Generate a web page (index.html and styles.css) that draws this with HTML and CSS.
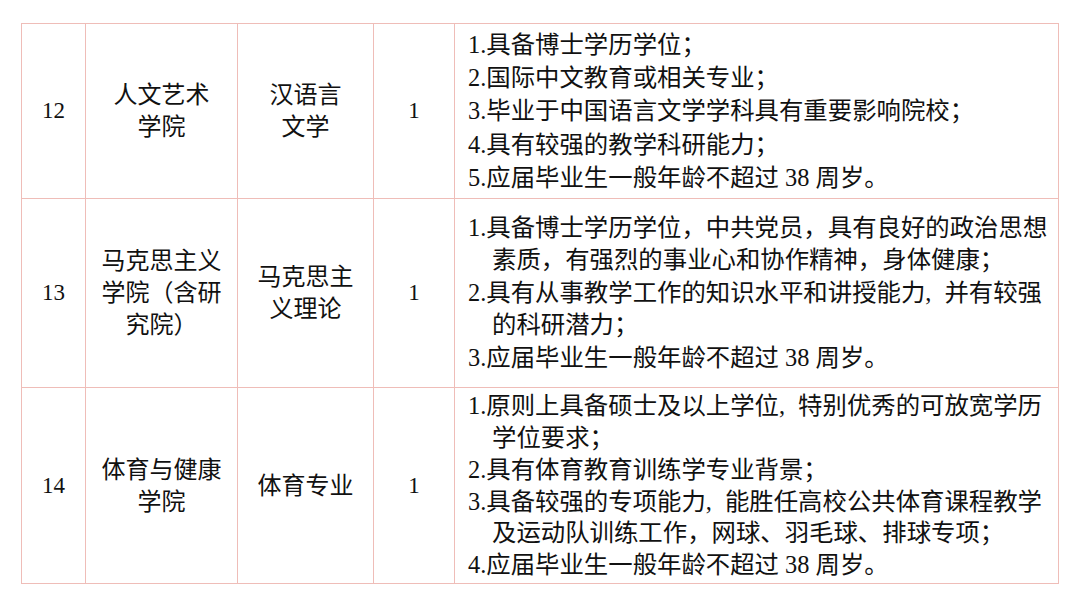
FILE: index.html
```html
<!DOCTYPE html>
<html lang="zh-CN">
<head>
<meta charset="utf-8">
<link rel="stylesheet" href="styles.css">
</head>
<body>
<div class="page">
<table class="grid">
  <colgroup>
    <col class="c-no"><col class="c-dept"><col class="c-major"><col class="c-num"><col class="c-req">
  </colgroup>
  <tr class="r1">
    <td class="no">12</td>
    <td class="mid">人文艺术<br>学院</td>
    <td class="mid">汉语言<br>文学</td>
    <td class="no">1</td>
    <td class="req">
      <div class="item">1.具备博士学历学位；</div>
      <div class="item">2.国际中文教育或相关专业；</div>
      <div class="item">3.毕业于中国语言文学学科具有重要影响院校；</div>
      <div class="item">4.具有较强的教学科研能力；</div>
      <div class="item">5.应届毕业生一般年龄不超过 38 周岁。</div>
    </td>
  </tr>
  <tr class="r2">
    <td class="no">13</td>
    <td class="mid">马克思主义<br>学院（含研<br>究院）</td>
    <td class="mid">马克思主<br>义理论</td>
    <td class="no">1</td>
    <td class="req">
      <div class="item">1.具备博士学历学位，中共党员，具有良好的政治思想<br>素质，有强烈的事业心和协作精神，身体健康；</div>
      <div class="item">2.具有从事教学工作的知识水平和讲授能力<span class="hc">,</span>并有较强<br>的科研潜力；</div>
      <div class="item">3.应届毕业生一般年龄不超过 38 周岁。</div>
    </td>
  </tr>
  <tr class="r3">
    <td class="no">14</td>
    <td class="mid">体育与健康<br>学院</td>
    <td class="mid">体育专业</td>
    <td class="no">1</td>
    <td class="req">
      <div class="item">1.原则上具备硕士及以上学位<span class="hc">,</span>特别优秀的可放宽学历<br>学位要求；</div>
      <div class="item">2.具有体育教育训练学专业背景；</div>
      <div class="item">3.具备较强的专项能力<span class="hc">,</span>能胜任高校公共体育课程教学<br>及运动队训练工作，网球、羽毛球、排球专项；</div>
      <div class="item">4.应届毕业生一般年龄不超过 38 周岁。</div>
    </td>
  </tr>
</table>
</div>
</body>
</html>
```

FILE: styles.css
```css
html, body {
  margin: 0;
  padding: 0;
  background: #ffffff;
}
body {
  font-family: "Liberation Serif", "Noto Sans CJK SC", sans-serif;
  color: #111111;
}
.page {
  padding: 23px 0 0 21px;
}
.grid {
  border-collapse: collapse;
  table-layout: fixed;
  width: 1037px;
  border: 1px solid #dcb5ae;
}
.c-no { width: 64px; }
.c-dept { width: 152px; }
.c-major { width: 136px; }
.c-num { width: 81px; }
.c-req { width: 604px; }
.grid td {
  border: 1px solid #efbdb8;
  padding: 0;
  vertical-align: middle;
  font-size: 24px;
  white-space: nowrap;
}
.grid td.no {
  text-align: center;
  font-size: 23px;
}
.grid td.mid {
  text-align: center;
  line-height: 32px;
}
.grid td.req {
  padding-left: 13px;
  font-size: 24.4px;
}
.item {
  padding-left: 24px;
  text-indent: -24px;
}
.hc {
  margin-right: 13px;
}
.r1 { height: 175px; }
.r1 .req { line-height: 33.3px; }
.r2 { height: 189px; }
.r2 .req { line-height: 32.4px; }
.r3 { height: 196px; }
.r3 .req { line-height: 31.8px; }
```
